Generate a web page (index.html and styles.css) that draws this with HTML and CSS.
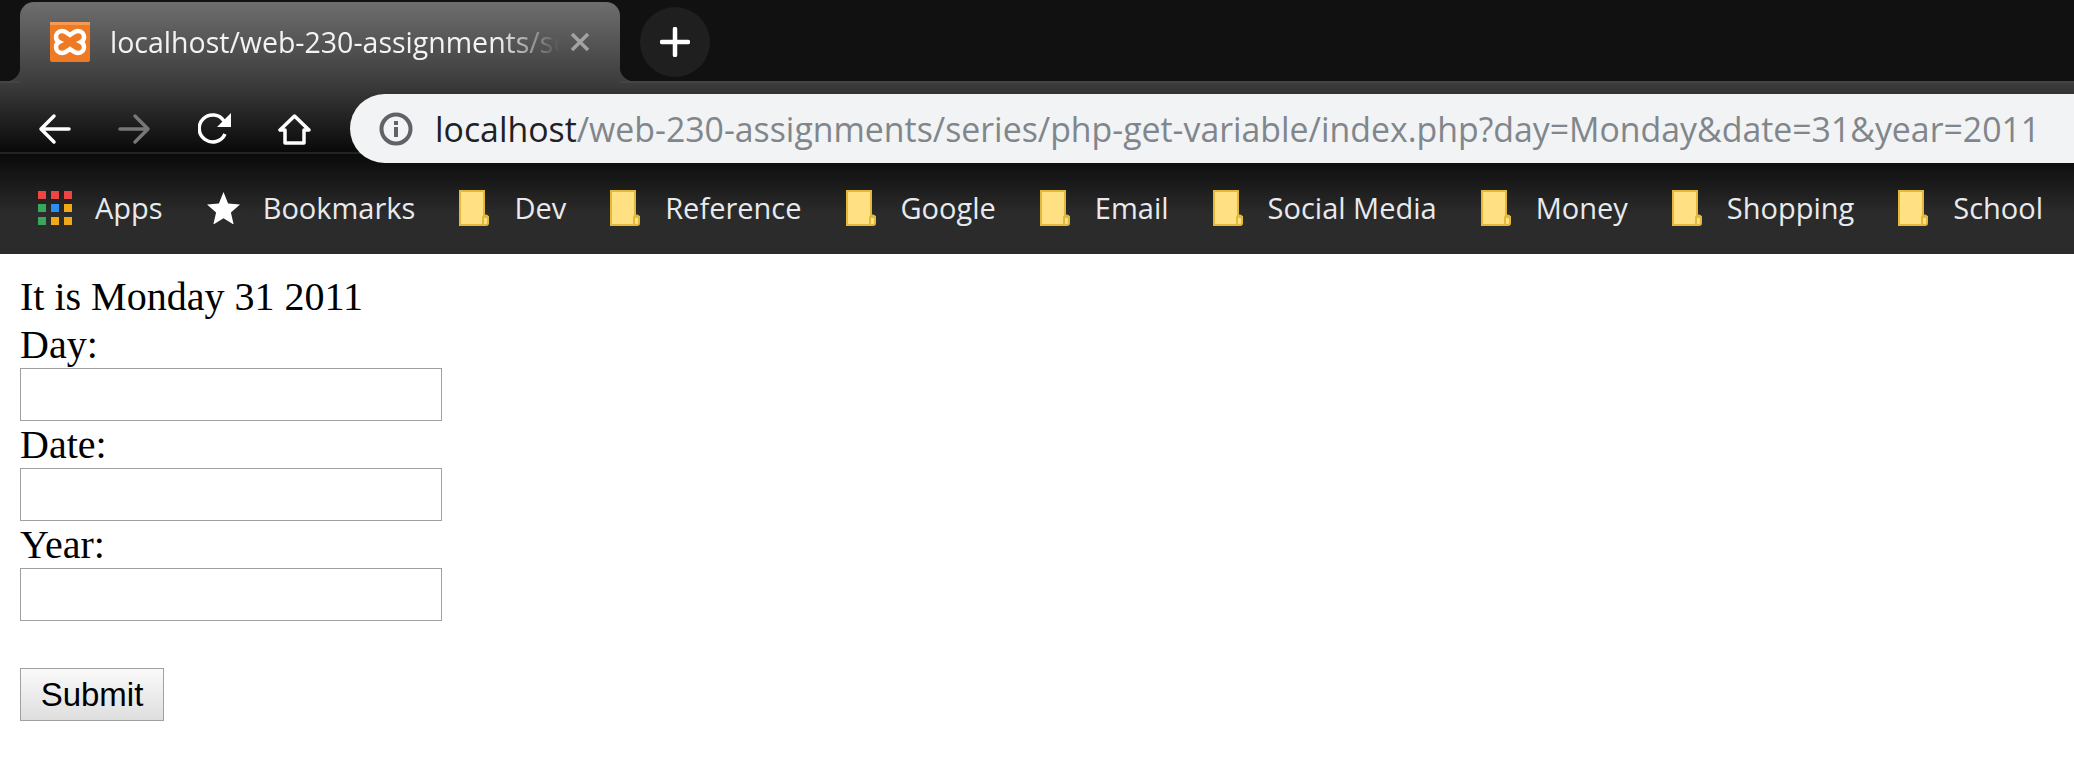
FILE: index.html
```html
<!DOCTYPE html>
<html lang="en">
<head>
    <meta charset="UTF-8">
    <title>localhost/web-230-assignments/series/php-get-variable/index.php</title>
    <link rel="stylesheet" href="styles.css">
</head>
<body>
    <div class="browser">
        <!-- tabs -->
        <div class="tabstrip">
            <div class="tab">
                <svg class="favicon" viewBox="0 0 40 40">
                    <rect x="0" y="0" width="40" height="40" rx="2" fill="#ee7a24"/>
                    <rect x="0" y="0" width="40" height="3" fill="#f59a55"/>
                    <path d="M12 9c-4 0-6 3-6 6 0 2 1 4 3 5-2 1-3 3-3 5 0 3 2 6 6 6 3 0 5-2 8-4 3 2 5 4 8 4 4 0 6-3 6-6 0-2-1-4-3-5 2-1 3-3 3-5 0-3-2-6-6-6-3 0-5 2-8 4-3-2-5-4-8-4z" fill="none" stroke="#fff" stroke-width="4.5"/>
                </svg>
                <span class="tab-title">localhost/web-230-assignments/series</span>
                <svg class="tab-close" viewBox="0 0 20 20">
                    <path d="M2 2l16 16M18 2L2 18" stroke="#a3a3a3" stroke-width="3.5" fill="none"/>
                </svg>
            </div>
            <div class="new-tab">
                <svg viewBox="0 0 30 30" width="30" height="30">
                    <path d="M15 2v26M2 15h26" stroke="#fff" stroke-width="4.5" stroke-linecap="round" fill="none"/>
                </svg>
            </div>
        </div>

        <!-- back / forward / reload / home and the address bar -->
        <div class="toolbar">
            <svg class="nav-btn" viewBox="0 0 33 30">
                <path d="M31 15H3M16 2L3 15l13 13" stroke="#fff" stroke-width="3.5" stroke-linecap="round" stroke-linejoin="round" fill="none"/>
            </svg>
            <svg class="nav-btn" viewBox="0 0 33 30">
                <path d="M2 15h28M17 2l13 13-13 13" stroke="#777" stroke-width="3.5" stroke-linecap="round" stroke-linejoin="round" fill="none"/>
            </svg>
            <svg class="nav-btn" viewBox="0 0 33 32">
                <path d="M27 21a13.5 13.5 0 1 1-1-13" stroke="#fff" stroke-width="3.5" fill="none"/>
                <path d="M33 0v14H19z" fill="#fff"/>
            </svg>
            <svg class="nav-btn" viewBox="0 0 33 32">
                <path d="M16.5 3L2 17h5v13h19V17h5z" stroke="#fff" stroke-width="3.5" stroke-linejoin="round" fill="none"/>
            </svg>
            <div class="omnibox">
                <svg class="info-icon" viewBox="0 0 34 34">
                    <circle cx="17" cy="17" r="14.5" stroke="#5f6368" stroke-width="4" fill="none"/>
                    <rect x="15" y="15" width="4" height="10" fill="#5f6368"/>
                    <rect x="15" y="9" width="4" height="4" fill="#5f6368"/>
                </svg>
                <span class="url"><span class="url-host">localhost</span>/web-230-assignments/series/php-get-variable/index.php?day=Monday&amp;date=31&amp;year=2011</span>
            </div>
        </div>

        <!-- bookmarks -->
        <div class="bookmarks">
            <div class="bookmark">
                <svg class="apps-icon" viewBox="0 0 34 34">
                    <rect x="0" y="0" width="8" height="8" fill="#ee4444"/>
                    <rect x="13" y="0" width="8" height="8" fill="#ee4444"/>
                    <rect x="26" y="0" width="8" height="8" fill="#ee4444"/>
                    <rect x="0" y="13" width="8" height="8" fill="#3aa55c"/>
                    <rect x="13" y="13" width="8" height="8" fill="#2b8ef0"/>
                    <rect x="26" y="13" width="8" height="8" fill="#f0a818"/>
                    <rect x="0" y="26" width="8" height="8" fill="#3aa55c"/>
                    <rect x="13" y="26" width="8" height="8" fill="#f0a818"/>
                    <rect x="26" y="26" width="8" height="8" fill="#f0a818"/>
                </svg>
                <span>Apps</span>
            </div>
            <div class="bookmark">
                <svg class="star-icon" viewBox="0 0 33 32">
                    <path d="M16.5 0l4.6 11.6 11.9 1-9.100 8 2.800 12-10.200-6.400-10.200 6.400 2.800-12-9.100-8 11.900-1z" fill="#fff"/>
                </svg>
                <span>Bookmarks</span>
            </div>
            <div class="bookmark">
                <svg class="folder-icon"><use href="#folder"/></svg>
                <span>Dev</span>
            </div>
            <div class="bookmark">
                <svg class="folder-icon"><use href="#folder"/></svg>
                <span>Reference</span>
            </div>
            <div class="bookmark">
                <svg class="folder-icon"><use href="#folder"/></svg>
                <span>Google</span>
            </div>
            <div class="bookmark">
                <svg class="folder-icon"><use href="#folder"/></svg>
                <span>Email</span>
            </div>
            <div class="bookmark">
                <svg class="folder-icon"><use href="#folder"/></svg>
                <span>Social Media</span>
            </div>
            <div class="bookmark">
                <svg class="folder-icon"><use href="#folder"/></svg>
                <span>Money</span>
            </div>
            <div class="bookmark">
                <svg class="folder-icon"><use href="#folder"/></svg>
                <span>Shopping</span>
            </div>
            <div class="bookmark">
                <svg class="folder-icon"><use href="#folder"/></svg>
                <span>School</span>
            </div>
        </div>
    </div>

    <svg class="icon-defs">
        <symbol id="folder" viewBox="0 0 30 36">
            <path d="M1 1h24v26h4v6a2 2 0 0 1-2 2H1z" fill="#ffe082" stroke="#e2b93b" stroke-width="2"/>
            <path d="M24 34v-6a2.500 2.500 0 0 1 5 0" fill="none" stroke="#e2b93b" stroke-width="2"/>
        </symbol>
    </svg>

    <div class="page">
        <div class="greeting">It is Monday 31 2011</div>
        <form>
            <label class="field-label" for="day">Day:</label>
            <input class="field-input" id="day" type="text">
            <label class="field-label" for="date">Date:</label>
            <input class="field-input" id="date" type="text">
            <label class="field-label" for="year">Year:</label>
            <input class="field-input" id="year" type="text">
            <button class="submit-btn" type="submit">Submit</button>
        </form>
    </div>
</body>
</html>
```

FILE: styles.css
```css
body {
    margin: 0;
    background-color: #fff;
    overflow: hidden;
}

.browser {
    font-family: "Open Sans", sans-serif;
}

.icon-defs {
    display: none;
}

/* tabs */
.tabstrip {
    display: flex;
    align-items: flex-start;
    height: 81px;
    padding-left: 20px;
    background-color: #111;
}

.tab {
    position: relative;
    z-index: 1;
    display: flex;
    align-items: center;
    box-sizing: border-box;
    width: 600px;
    height: 81px;
    margin-top: 2px;
    padding: 0 30px 2px 30px;
    border-radius: 14px 14px 0 0;
    background: linear-gradient(#6e6e6e, #3c3c3c);
}

.tab::before,
.tab::after {
    content: "";
    position: absolute;
    bottom: 2px;
    width: 14px;
    height: 14px;
}

.tab::before {
    left: -14px;
    background: radial-gradient(circle at 0 0, #111 14px, #3e3e3e 14.5px);
}

.tab::after {
    right: -14px;
    background: radial-gradient(circle at 100% 0, #111 14px, #3e3e3e 14.5px);
}

.favicon {
    flex: none;
    width: 40px;
    height: 40px;
}

.tab-title {
    flex: 1;
    margin-left: 20px;
    overflow: hidden;
    white-space: nowrap;
    font-size: 28.5px;
    color: #f1f3f4;
    -webkit-mask-image: linear-gradient(to right, #000 86%, transparent 100%);
    mask-image: linear-gradient(to right, #000 86%, transparent 100%);
}

.tab-close {
    flex: none;
    width: 20px;
    height: 20px;
    margin-left: 10px;
}

.new-tab {
    display: flex;
    align-items: center;
    justify-content: center;
    width: 70px;
    height: 70px;
    margin: 7px 0 0 20px;
    border-radius: 50%;
    background-color: #1f1f1f;
}

/* toolbar */
.toolbar {
    display: flex;
    align-items: flex-start;
    box-sizing: border-box;
    height: 71px;
    padding-left: 38px;
    gap: 47px;
    border-top: 2px solid #444;
    background: linear-gradient(#3c3c3c, #090909);
}

.nav-btn {
    flex: none;
    width: 33px;
    height: 32px;
    margin-top: 30px;
}

.omnibox {
    flex: 1;
    position: relative;
    z-index: 1;
    display: flex;
    align-items: center;
    height: 69px;
    margin: 11px 0 0 -8px;
    padding-left: 29px;
    border-radius: 35px 0 0 35px;
    background-color: #f1f3f4;
}

.info-icon {
    flex: none;
    width: 34px;
    height: 34px;
}

.url {
    margin-left: 22px;
    white-space: nowrap;
    font-size: 33.85px;
    color: #80868b;
}

.url-host {
    color: #202124;
}

/* bookmarks */
.bookmarks {
    display: flex;
    align-items: center;
    gap: 44px;
    box-sizing: border-box;
    height: 102px;
    padding: 7px 0 0 38px;
    border-top: 2px solid #222;
    background: linear-gradient(#0a0a0a, #2b2b2b 60%);
}

.bookmark {
    display: flex;
    align-items: center;
    gap: 23px;
    white-space: nowrap;
    font-size: 29px;
    color: #e8eaed;
}

.apps-icon {
    flex: none;
    width: 34px;
    height: 34px;
}

.star-icon {
    flex: none;
    width: 33px;
    height: 32px;
}

.folder-icon {
    flex: none;
    width: 30px;
    height: 36px;
    margin-right: 2px;
}

/* the actual php page */
.page {
    padding: 20px;
    font-family: "Liberation Serif", serif;
    font-size: 40px;
    color: #000;
}

.greeting {
    line-height: 46px;
    margin-bottom: 1px;
}

.field-label {
    display: block;
    line-height: 47px;
}

.field-input {
    display: block;
    box-sizing: border-box;
    width: 422px;
    height: 53px;
    margin: 0;
    border: 1px solid #a0a0a0;
    background-color: #fff;
}

.submit-btn {
    display: block;
    box-sizing: border-box;
    width: 144px;
    height: 53px;
    margin-top: 47px;
    padding: 0;
    border: 1px solid #a0a0a0;
    background: linear-gradient(#fafafa, #dedede);
    font-family: "Liberation Sans", sans-serif;
    font-size: 33px;
    color: #000;
}
```
